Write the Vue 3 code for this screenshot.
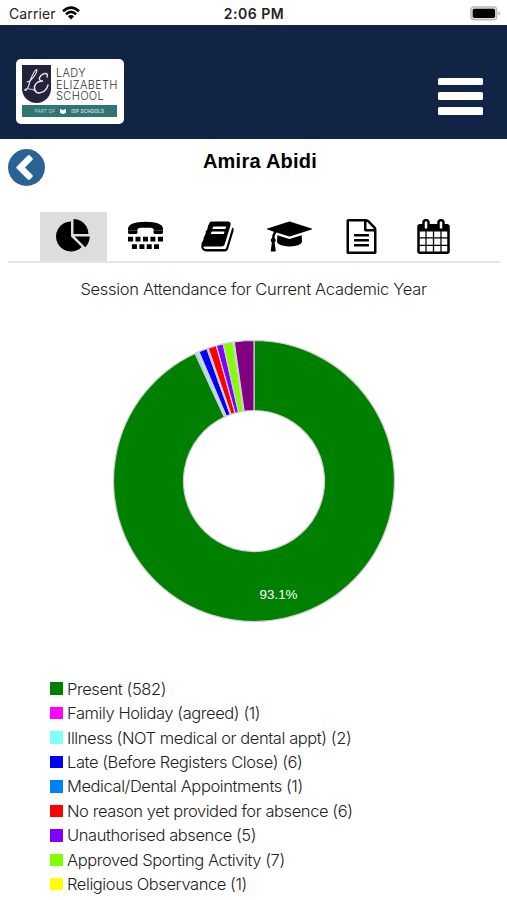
<script setup>
const tabs = [
  {
    id: 'attendance',
    label: 'Attendance',
    viewBox: '0 0 1792 1792',
    width: 35,
    path: 'M768 890l546 546q-106 108-247.5 168t-298.5 60q-209 0-385.5-103t-279.5-279.5-103-385.5 103-385.5 279.5-279.5 385.5-103v762zm187 6h773q0 157-60 298.5t-168 247.5zm709-128h-768v-768q209 0 385.5 103t279.5 279.5 103 385.5z',
  },
  {
    id: 'contact',
    label: 'Contact',
    viewBox: '0 0 35 35',
    width: 35,
    path: 'M0 11V9.500Q1 2.700 17.500 2.700T35 9.500V11H26Q25 8.700 22.500 8.700H12.500Q10 8.700 9 11ZM0 11.300H9.500V13.600Q9.500 14.900 8.200 14.900H1.300Q0 14.900 0 13.600ZM25.500 11.300H35V13.600Q35 14.900 33.700 14.900H26.800Q25.500 14.900 25.500 13.600ZM0 17.700h5.100v4.900H0zM7.500 17.700h5v4.900h-5zM15 17.700h5v4.900h-5zM22.400 17.700h5v4.900h-5zM29.900 17.700H35v4.900h-5.100zM3.900 25.200h5v4.900h-5zM11.400 25.200h5v4.900h-5zM18.700 25.200h5v4.900h-5zM26 25.200h5v4.900h-5z',
  },
  {
    id: 'homework',
    label: 'Homework',
    viewBox: '0 0 1792 1792',
    width: 35,
    path: 'M1703 478q40 57 18 129l-275 906q-19 64-76.500 107.500t-122.500 43.500h-923q-77 0-148.500-53.500t-99.500-131.500q-24-67-2-127 0-4 3-27t4-37q1-8-3-21.500t-3-19.500q2-11 8-21t16.500-23.500 16.500-23.500q23-38 45-91.500t30-91.500q3-10 .5-30t-.5-28q3-11 17-28t17-23q21-36 42-92t25-90q1-9-2.500-32t.5-28q4-13 22-30.500t22-22.500q19-26 42.500-84.500t27.500-96.500q1-8-3-25.500t-2-26.500q2-8 9-18t18-23 17-21q8-12 16.500-30.500t15-35 16-36 19.500-32 26.500-23.500 36-11.500 47.500 5.500l-1 3q38-9 51-9h761q74 0 114 56t18 130l-274 906q-36 119-71.500 153.500t-128.500 34.500h-869q-27 0-38 15-11 16-1 43 24 70 144 70h923q29 0 56-15.500t35-41.500l300-987q7-22 5-57 38 15 59 43zm-1064 2q-4 13 2 22.500t20 9.500h608q13 0 25.500-9.500t16.500-22.500l21-64q4-13-2-22.500t-20-9.500h-608q-13 0-25.500 9.500t-16.500 22.500zm-83 256q-4 13 2 22.500t20 9.500h608q13 0 25.500-9.500t16.500-22.500l21-64q4-13-2-22.500t-20-9.500h-608q-13 0-25.500 9.500t-16.500 22.500z',
  },
  {
    id: 'grades',
    label: 'Grades',
    viewBox: '0 0 2304 1792',
    width: 45,
    path: 'M1774 836l18 316q4 69-82 128t-235 93.500-323 34.500-323-34.500-235-93.500-82-128l18-316 574 181q22 7 48 7t48-7zm530-324q0 23-22 31l-1120 352q-4 1-10 1t-10-1l-652-206q-43 34-71 111.500t-34 178.500q63 36 63 109 0 69-58 107l58 433q2 14-8 25-9 11-24 11h-192q-15 0-24-11-10-11-8-25l58-433q-58-38-58-107 0-73 65-111 11-207 98-330l-333-104q-22-8-22-31t22-31l1120-352q4-1 10-1t10 1l1120 352q22 8 22 31z',
  },
  {
    id: 'reports',
    label: 'Reports',
    viewBox: '0 0 1792 1792',
    width: 35,
    path: 'M1596 380q28 28 48 76t20 88v1152q0 40-28 68t-68 28h-1344q-40 0-68-28t-28-68v-1600q0-40 28-68t68-28h896q40 0 88 20t76 48zm-444-244v376h376q-10-29-22-41l-313-313q-12-12-41-22zm384 1528v-1024h-416q-40 0-68-28t-28-68v-416h-768v1536h1280zm-1024-864q0-14 9-23t23-9h704q14 0 23 9t9 23v64q0 14-9 23t-23 9h-704q-14 0-23-9t-9-23v-64zm736 224q14 0 23 9t9 23v64q0 14-9 23t-23 9h-704q-14 0-23-9t-9-23v-64q0-14 9-23t23-9h704zm0 256q14 0 23 9t9 23v64q0 14-9 23t-23 9h-704q-14 0-23-9t-9-23v-64q0-14 9-23t23-9h704z',
  },
  {
    id: 'calendar',
    label: 'Calendar',
    viewBox: '0 0 1792 1792',
    width: 35,
    path: 'M192 1664h288v-288h-288v288zm352 0h320v-288h-320v288zm-352-352h288v-320h-288v320zm352 0h320v-320h-320v320zm-352-384h288v-288h-288v288zm736 736h320v-288h-320v288zm-384-736h320v-288h-320v288zm768 736h288v-288h-288v288zm-384-352h320v-320h-320v320zm-352-864v-288q0-13-9.500-22.500t-22.500-9.500h-64q-13 0-22.500 9.500t-9.500 22.500v288q0 13 9.500 22.500t22.500 9.500h64q13 0 22.500-9.500t9.500-22.500zm736 864h288v-320h-288v320zm-384-384h320v-288h-320v288zm384 0h288v-288h-288v288zm32-480v-288q0-13-9.500-22.500t-22.500-9.500h-64q-13 0-22.500 9.500t-9.500 22.500v288q0 13 9.500 22.500t22.500 9.500h64q13 0 22.500-9.500t9.500-22.500zm384-64v1280q0 52-38 90t-90 38h-1408q-52 0-90-38t-38-90v-1280q0-52 38-90t90-38h128v-96q0-66 47-113t113-47h64q66 0 113 47t47 113v96h384v-96q0-66 47-113t113-47h64q66 0 113 47t47 113v96h128q52 0 90 38t38 90z',
  },
]

const sessions = [
  { label: 'Present', count: 582, color: '#008000' },
  { label: 'Family Holiday (agreed)', count: 1, color: '#ff00ff' },
  { label: 'Illness (NOT medical or dental appt)', count: 2, color: '#80ffff' },
  { label: 'Late (Before Registers Close)', count: 6, color: '#0000ff' },
  { label: 'Medical/Dental Appointments', count: 1, color: '#0080ff' },
  { label: 'No reason yet provided for absence', count: 6, color: '#ff0000' },
  { label: 'Unauthorised absence', count: 5, color: '#8000ff' },
  { label: 'Approved Sporting Activity', count: 7, color: '#80ff00' },
  { label: 'Religious Observance', count: 1, color: '#ffff00' },
]
const otherCount = 14

const R = 140.5
const r = 70.5
const total = sessions.reduce((sum, s) => sum + s.count, otherCount)

const point = (radius, turn) => {
  const a = turn * 2 * Math.PI
  return `${(radius * Math.sin(a)).toFixed(2)} ${(-radius * Math.cos(a)).toFixed(2)}`
}

let start = 0
const slices = [...sessions, { label: 'Other', count: otherCount, color: '#800080' }].map((s) => {
  const from = start / total
  start += s.count
  const to = start / total
  const large = to - from > 0.5 ? 1 : 0
  return {
    color: s.color,
    d: `M${point(R, from)}A${R} ${R} 0 ${large} 1 ${point(R, to)}L${point(r, to)}A${r} ${r} 0 ${large} 0 ${point(r, from)}Z`,
  }
})
const presentPct = ((sessions[0].count / total) * 100).toFixed(1) + '%'
</script>

<template>
  <div class="app">
    <div class="status">
      <div class="status-left">
        <span>Carrier</span>
        <svg class="wifi" viewBox="0 0 18 14" width="18" height="14">
          <path d="M1 5.200Q9-2 17 5.200M3.900 8.200Q9 3.600 14.100 8.200" fill="none" stroke="#000" stroke-width="2.500" />
          <path d="M5.900 10.200Q9 7.600 12.100 10.200L9 13.500Z" />
        </svg>
      </div>
      <span class="time">2:06 PM</span>
      <div class="status-right">
        <svg viewBox="0 0 31 15" width="31" height="15">
          <rect x=".9" y=".9" width="26" height="13" rx="3.500" fill="#ddd" stroke="#b4b4b4" stroke-width="1.200" />
          <rect x="2.700" y="2.700" width="22.400" height="9.400" rx="1.800" />
          <path d="M28.500 5.200Q30.300 6 30.300 7.400T28.500 9.600Z" fill="#b4b4b4" />
        </svg>
      </div>
    </div>

    <header class="header">
      <div class="logo">
        <div class="logo-top">
          <svg viewBox="0 0 29 38" width="29" height="38">
            <path d="M0 0H29V23.500A14.500 14.500 0 0 1 0 23.500Z" fill="#25233a" />
            <g fill="none" stroke="#e8e8ee" stroke-linecap="round">
              <path d="M5 17C9 17 15 8 15 5C14.500 2.500 9 11 7.500 18C6.500 22 4.500 26 3 25.500C2.500 23 8 23 14 26" stroke-width="1.100" />
              <path d="M25 12C27 8 22 7 18.500 11C16 14 18 16.500 21 16C14 16 11 21 13 25.500C15 30 24 28 26 20" stroke-width="1.400" />
            </g>
          </svg>
          <div class="logo-name">
            <span>LADY</span>
            <span>ELIZABETH</span>
            <span>SCHOOL</span>
          </div>
        </div>
        <div class="logo-strip">
          <span>PART OF</span>
          <svg viewBox="0 0 6 5" width="6" height="5"><path d="M0 0L3 1L6 0V4L3 5L0 4Z" fill="#fff" /></svg>
          <b>ISP SCHOOLS</b>
        </div>
      </div>
      <button class="menu" aria-label="Menu"><i /><i /><i /></button>
    </header>

    <div class="title-row">
      <button class="back" aria-label="Back">
        <svg viewBox="128 128 1536 1536" width="37" height="37">
          <path d="M1037 1395l102-102q19-19 19-45t-19-45l-307-307 307-307q19-19 19-45t-19-45l-102-102q-19-19-45-19t-45 19l-454 454q-19 19-19 45t19 45l454 454q19 19 45 19t45-19zm627-499q0 209-103 385.500t-279.500 279.500-385.500 103-385.500-103-279.500-279.500-103-385.500 103-385.500 279.500-279.500 385.500-103 385.500 103 279.500 279.500 103 385.500z" />
        </svg>
      </button>
      <h1>Amira Abidi</h1>
    </div>

    <nav class="tabs">
      <button
        v-for="tab in tabs"
        :key="tab.id"
        class="tab"
        :class="[tab.id, { active: tab.id === 'attendance' }]"
        :aria-label="tab.label"
      >
        <svg :viewBox="tab.viewBox" :width="tab.width" height="35"><path :d="tab.path" /></svg>
      </button>
    </nav>

    <h2>Session Attendance for Current Academic Year</h2>

    <svg class="chart" viewBox="-142 -142 284 284" width="284" height="284">
      <path v-for="s in slices" :key="s.color" :d="s.d" :fill="s.color" stroke="#d0d0d0" stroke-width="1.200" />
      <text x="24.500" y="118" text-anchor="middle">{{ presentPct }}</text>
    </svg>

    <ul class="legend">
      <li v-for="s in sessions" :key="s.label">
        <span class="swatch" :style="{ background: s.color }" />
        <span>{{ s.label }} ({{ s.count }})</span>
      </li>
    </ul>
  </div>
</template>

<style>
body {
  margin: 0;
  background: #fff;
}
</style>

<style scoped>
.app {
  width: 507px;
  height: 900px;
  overflow: hidden;
  background: #fff;
  color: #000;
  font-family: "Liberation Sans", Arial, sans-serif;
}
button {
  border: 0;
  padding: 0;
  background: none;
}
svg {
  display: block;
}
.status {
  display: grid;
  grid-template-columns: 1fr auto 1fr;
  align-items: center;
  height: 25px;
  box-sizing: border-box;
  padding: 2px 6px 0 9px;
  font-family: Inter, sans-serif;
  font-size: 14px;
  line-height: 20px;
  color: #222;
}
.status-left {
  display: flex;
  align-items: center;
  gap: 6px;
  letter-spacing: 0.1px;
}
.wifi {
  margin-top: -2px;
}
.time {
  font-weight: 600;
  letter-spacing: 0.5px;
  margin-right: 2px;
}
.status-right {
  display: flex;
  justify-content: flex-end;
}
.header {
  display: flex;
  align-items: flex-start;
  justify-content: space-between;
  height: 114px;
  box-sizing: border-box;
  padding: 34px 24px 0 16px;
  background: #112445;
}
.logo {
  width: 108px;
  height: 65px;
  box-sizing: border-box;
  padding: 6px 6px 0;
  border-radius: 5px;
  background: #fff;
}
.logo-top {
  display: flex;
  gap: 5px;
  height: 40px;
}
.logo-name {
  display: flex;
  flex-direction: column;
  padding-top: 3px;
  font-family: Inter, sans-serif;
  font-weight: 300;
  font-size: 11px;
  letter-spacing: 0.350px;
  line-height: 11.600px;
  color: #333;
}
.logo-strip {
  display: flex;
  align-items: center;
  justify-content: center;
  gap: 5px;
  height: 12px;
  margin-right: 1px;
  background: #317572;
  color: #c5dcdb;
  font-size: 4.500px;
  letter-spacing: 0.2px;
}
.menu {
  display: flex;
  flex-direction: column;
  gap: 7px;
  margin-top: 18.500px;
}
.menu i {
  width: 45px;
  height: 7.800px;
  border-radius: 1.500px;
  background: #fff;
}
.title-row {
  display: grid;
  grid-template-columns: 37px 1fr 37px;
  height: 73px;
  box-sizing: border-box;
  padding: 10px 4px 0 8px;
}
.back {
  align-self: start;
  fill: #2b6294;
}
h1 {
  margin: 0;
  padding-left: 9px;
  text-align: center;
  font-size: 20px;
  letter-spacing: 0.250px;
  line-height: 24px;
  font-weight: 700;
}
.tabs {
  display: flex;
  gap: 5px;
  height: 49px;
  margin: 0 7px 0 8px;
  padding-left: 32px;
  border-bottom: 2px solid #e4e4e4;
}
.tab {
  display: flex;
  justify-content: center;
  width: 67px;
  padding-top: 7px;
}
.tab.active {
  background: #ddd;
}
h2 {
  margin: 15px 0 0;
  text-align: center;
  font-family: Inter, "Liberation Sans", sans-serif;
  font-size: 16.500px;
  letter-spacing: -0.320px;
  line-height: 22px;
  font-weight: 300;
  color: #222;
}
.chart {
  margin: 39px 0 0 112px;
}
.chart text {
  fill: #fff;
  font-size: 13.400px;
}
.legend {
  margin: 53.500px 0 0 50px;
  padding: 0;
  list-style: none;
}
.legend li {
  display: flex;
  align-items: center;
  gap: 4.500px;
  height: 24.450px;
  font-family: Inter, "Liberation Sans", sans-serif;
  font-size: 16.500px;
  font-weight: 300;
  letter-spacing: -0.420px;
  color: #222;
}
.swatch {
  width: 12.500px;
  height: 12.500px;
}
</style>
